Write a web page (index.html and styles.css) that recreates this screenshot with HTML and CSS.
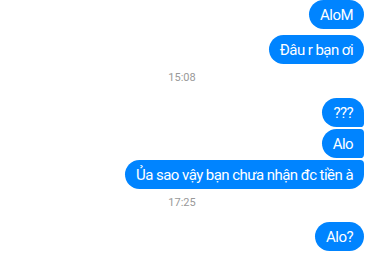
FILE: index.html
```html
<!DOCTYPE html>
<html>
<head>
  <link rel="stylesheet" href="styles.css">
</head>
<body>
  <div class="chat">
    <div class="row first"><div class="bubble">AloM</div></div>
    <div class="row gap-sm"><div class="bubble">Đâu r bạn ơi</div></div>

    <div class="time">15:08</div>

    <div class="row"><div class="bubble top">???</div></div>
    <div class="row"><div class="bubble mid">Alo</div></div>
    <div class="row"><div class="bubble bottom">Ủa sao vậy bạn chưa nhận đc tiền à</div></div>

    <div class="time late">17:25</div>

    <div class="row"><div class="bubble">Alo?</div></div>
  </div>
</body>
</html>
```

FILE: styles.css
```css
* {
  box-sizing: border-box;
}

body {
  margin: 0;
  width: 374px;
  height: 257px;
  overflow: hidden;
  background: #fff;
  font-family: Roboto, 'Noto Sans', sans-serif;
}

.chat {
  display: flex;
  flex-direction: column;
  padding: 0 10px 0 0;
}

.row {
  display: flex;
  justify-content: flex-end;
  margin-top: 2px;
}

.row.first {
  margin-top: 0;
}

.row.gap-sm {
  margin-top: 6px;
}

.bubble {
  height: 29px;
  padding: 0 11px;
  display: flex;
  align-items: center;
  background: #0084ff;
  color: #fff;
  font-size: 15px;
  letter-spacing: -0.55px;
  border-radius: 15px;
  white-space: nowrap;
}

.bubble.top {
  border-bottom-right-radius: 4px;
}

.bubble.mid {
  border-top-right-radius: 4px;
  border-bottom-right-radius: 4px;
}

.bubble.bottom {
  border-top-right-radius: 4px;
}

.time {
  text-align: center;
  color: #999;
  font-size: 11px;
  line-height: 14px;
  margin: 7px 0 11px;
}

.time.late {
  margin: 7px 0 10px;
}
```
